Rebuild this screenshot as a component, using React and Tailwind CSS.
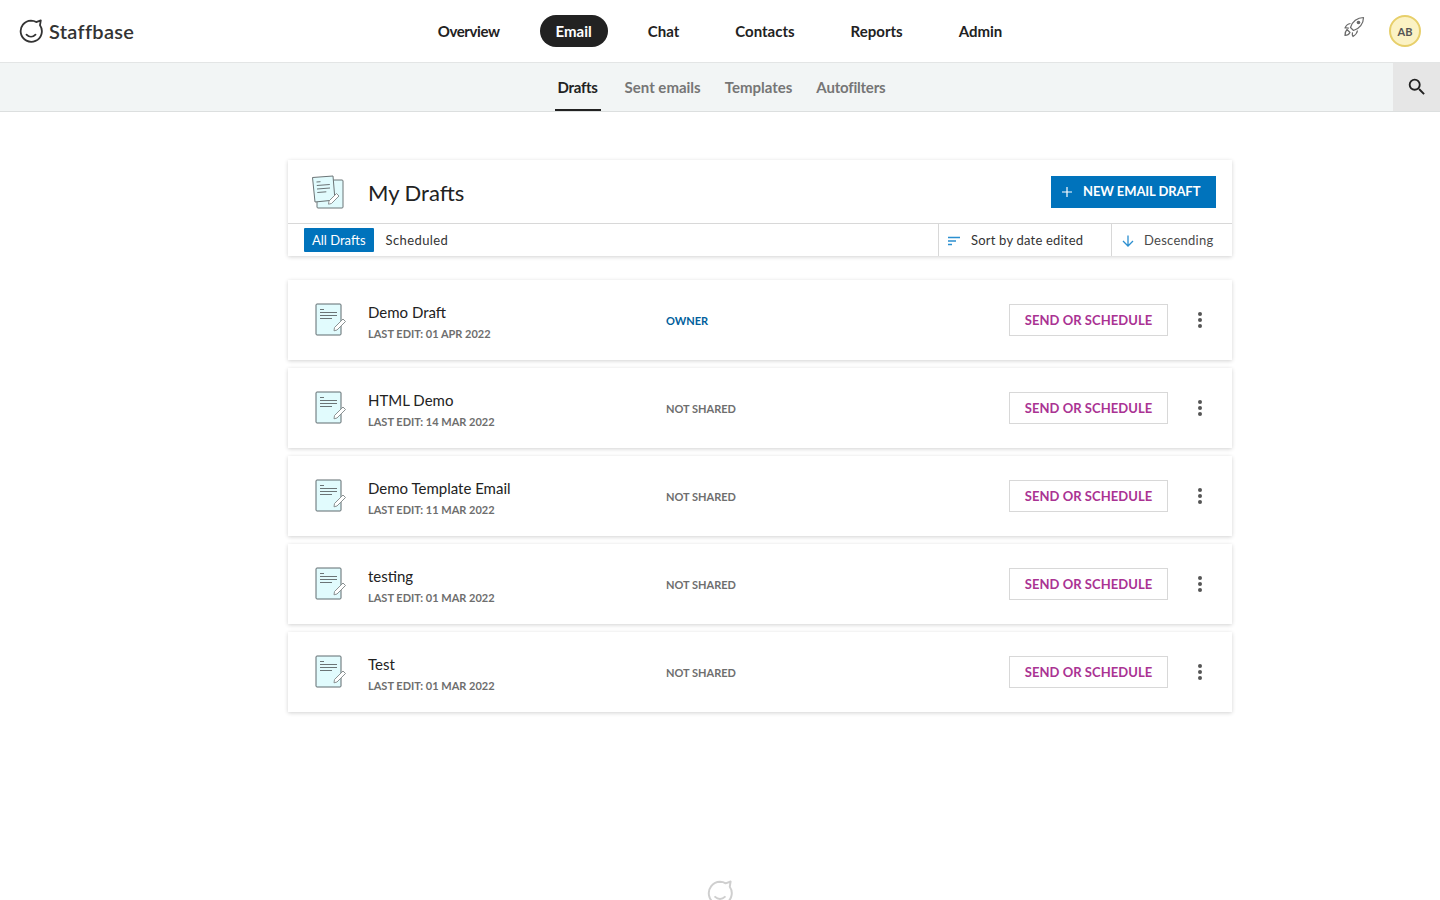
const drafts = [
  { name: 'Demo Draft', edited: '01 APR 2022', share: 'OWNER' },
  { name: 'HTML Demo', edited: '14 MAR 2022', share: 'NOT SHARED' },
  { name: 'Demo Template Email', edited: '11 MAR 2022', share: 'NOT SHARED' },
  { name: 'testing', edited: '01 MAR 2022', share: 'NOT SHARED' },
  { name: 'Test', edited: '01 MAR 2022', share: 'NOT SHARED' },
]

const mainNav = ['Overview', 'Email', 'Chat', 'Contacts', 'Reports', 'Admin']

function Logo({ className }) {
  return (
    <svg className={className} viewBox="0 0 24 24" fill="none" stroke="currentColor" strokeWidth="1.8" strokeLinecap="round" aria-hidden="true">
      <path d="M12 1.600c1.900 0 3.700.5 5.200 1.500L21.800 1.400 21 6.200a10.600 10.600 0 1 1-9-4.600z" strokeLinejoin="round" />
      <path d="M7.500 15.600c2.600 2.600 6.400 2.600 9 0" />
    </svg>
  )
}

function DocIcon() {
  return (
    <svg className="w-8 h-[34px]" viewBox="0 0 32 34" fill="none" aria-hidden="true">
      <rect x="1" y="1" width="25" height="31" rx="1" fill="#e1fbfd" stroke="#5f6b6e" strokeWidth="1" />
      <path d="M5 6.500h4M5 9.500h17M5 12.500h17M5 15.500h12" stroke="#6b7476" strokeWidth="1" />
      <path d="M19.500 24.500l8.500-8.500 2.500 2.500-8.500 8.500-3 .8z" fill="#fff" stroke="#8a9192" strokeWidth="1" strokeLinejoin="round" />
    </svg>
  )
}

function StackIcon() {
  return (
    <svg className="w-[34px] h-[34px]" viewBox="0 0 34 34" fill="none" aria-hidden="true">
      <rect x="6" y="5" width="26" height="28" rx="1" fill="#e1fbfd" stroke="#6b7476" strokeWidth="1" />
      <path d="M1.500 2.500L22 1l2 24-20 2z" fill="#e1fbfd" stroke="#6b7476" strokeWidth="1" strokeLinejoin="round" />
      <path d="M5.500 7l4-.3M5.800 10.500l13-1M6 14l13-1M6.300 17.500l9-.7" stroke="#6b7476" strokeWidth="1" />
      <path d="M18 26l7.500-7.500 2.500 2.500-7.500 7.500-3 .7z" fill="#fff" stroke="#8a9192" strokeWidth="1" strokeLinejoin="round" />
    </svg>
  )
}

function Rocket() {
  return (
    <svg className="w-[22px] h-[22px] mb-[8px] text-[#6a6a6a]" viewBox="0 0 22 22" fill="none" stroke="currentColor" strokeWidth="1.200" strokeLinejoin="round" aria-hidden="true">
      <path d="M20.500 1.500C14.500 1.500 9 5.500 7.500 11.500l3 3C16.500 13 20.500 7.500 20.500 1.500z" />
      <circle cx="15.500" cy="6.500" r="1.800" fill="currentColor" stroke="none" />
      <path d="M7.500 7.500C4.500 8 3 9.500 2 12c1.500-.3 3-.2 4 .3" />
      <path d="M4 13.500C2.500 15 2 17 2 19.500c2.500 0 4-1 5-3z" />
      <path d="M14.500 14.500c-.5 3-2 4.500-4.500 6-.7-1.300-.9-2.800-.5-4.200" />
    </svg>
  )
}

function DraftRow({ draft }) {
  const owner = draft.share === 'OWNER'
  return (
    <div className="flex items-center h-20 bg-white shadow-[0_1px_4px_rgba(0,0,0,0.18)]">
      <div className="flex items-center w-[378px] pl-[27px]">
        <DocIcon />
        <div className="ml-[21px] pt-[4px]">
          <div className="text-[15px] leading-5 text-[#222]">{draft.name}</div>
          <div className="mt-[4px] text-[11px] leading-4 font-bold text-[#6e6e6e]">LAST EDIT: {draft.edited}</div>
        </div>
      </div>
      <div className={`pt-[2px] text-[11px] font-bold ${owner ? 'text-[#00609c]' : 'text-[#6e6e6e]'}`}>{draft.share}</div>
      <div className="ml-auto flex items-center pr-[16px]">
        <button className="w-[159px] h-8 pt-[2px] border border-[#d8d8d8] text-[13px] font-bold tracking-[0.05px] text-[#aa3393]">SEND OR SCHEDULE</button>
        <div className="w-8 ml-4 flex flex-col items-center gap-[2px]">
          <span className="w-1 h-1 rounded-full bg-[#555]" />
          <span className="w-1 h-1 rounded-full bg-[#555]" />
          <span className="w-1 h-1 rounded-full bg-[#555]" />
        </div>
      </div>
    </div>
  )
}

export default function App() {
  return (
    <div className="h-[900px] overflow-hidden bg-white font-['Lato',sans-serif] text-[#222]">
      <header className="grid grid-cols-[1fr_auto_1fr] items-center h-[63px] border-b border-[#e3e5e5]">
        <div className="flex items-center pl-[19px] gap-[6px] text-[#333]">
          <Logo className="w-6 h-6" />
          <span className="text-[20px] font-semibold tracking-[0.3px]">Staffbase</span>
        </div>
        <nav className="flex items-center gap-6">
          {mainNav.map((item) => (
            <a
              key={item}
              className={`h-8 px-4 pt-px flex items-center rounded-full text-[15px] font-bold ${item === 'Email' ? 'bg-[#222] text-white' : 'text-[#222]'} ${item === 'Overview' ? 'tracking-[-0.4px]' : ''}`}
            >
              {item}
            </a>
          ))}
        </nav>
        <div className="flex items-center justify-end pr-[19px] gap-[24px]">
          <Rocket />
          <div className="w-8 h-8 pt-[2px] rounded-full border-2 border-[#e7cf6a] bg-[#fbf2c4] flex items-center justify-center text-[11px] font-bold text-[#555]">AB</div>
        </div>
      </header>

      <div className="grid grid-cols-[1fr_auto_1fr] h-[49px] bg-[#f2f5f5] border-b border-[#dcdfdf]">
        <div />
        <nav className="flex gap-4 ml-[4px] text-[15px] font-bold text-[#767676]">
          <a className="px-[3px] mr-1 pt-[2px] flex items-center h-[48px] tracking-[-0.3px] text-[#222] border-b-2 border-[#222]">Drafts</a>
          <a className="px-1 flex items-center h-[48px]">Sent emails</a>
          <a className="px-1 flex items-center h-[48px]">Templates</a>
          <a className="px-1 flex items-center h-[48px] tracking-[-0.2px]">Autofilters</a>
        </nav>
        <div className="flex justify-end">
          <div className="w-[47px] h-[48px] bg-[#e6e6e6] flex items-center justify-center">
            <svg className="w-[22px] h-[22px] text-[#222]" viewBox="0 0 24 24" fill="currentColor" aria-hidden="true">
              <path d="M15.500 14h-.79l-.28-.27A6.470 6.470 0 0 0 16 9.500 6.500 6.500 0 1 0 9.500 16c1.610 0 3.090-.59 4.230-1.570l.27.28v.79l5 4.990L20.490 19l-4.990-5zm-6 0C7.010 14 5 11.990 5 9.500S7.010 5 9.500 5 14 7.010 14 9.500 11.990 14 9.500 14z" />
            </svg>
          </div>
        </div>
      </div>

      <main className="w-[944px] ml-[288px] pt-12">
        <section className="bg-white shadow-[0_1px_4px_rgba(0,0,0,0.18)]">
          <div className="flex items-center h-[64px] pl-[23px] pr-4 border-b border-[#d8d8d8]">
            <StackIcon />
            <h1 className="ml-[23px] pt-[2px] text-[22px] font-normal text-[#222]">My Drafts</h1>
            <button className="ml-auto w-[165px] h-8 bg-[#0073bc] text-white text-[13px] font-bold tracking-[-0.1px] flex items-center pl-[11px] gap-[11px]">
              <svg className="w-[10px] h-[10px]" viewBox="0 0 10 10" stroke="currentColor" strokeWidth="1.200" aria-hidden="true">
                <path d="M5 0v10M0 5h10" />
              </svg>
              NEW EMAIL DRAFT
            </button>
          </div>
          <div className="flex items-center h-[32px] text-[13px] text-[#333]">
            <div className="flex-1 flex items-center pl-4">
              <span className="h-6 px-2 pt-px flex items-center bg-[#0073bc] text-white rounded-[1px]">All Drafts</span>
              <span className="ml-3 pt-px tracking-[0.4px]">Scheduled</span>
            </div>
            <div className="w-[173px] h-full pt-px border-l border-[#d8d8d8] flex items-center pl-[9px] gap-[11px] tracking-[0.2px]">
              <svg className="w-3 h-[10px] text-[#2b8fd0]" viewBox="0 0 12 10" stroke="currentColor" strokeWidth="1.300" aria-hidden="true">
                <path d="M0 1.500h12M0 5h8M0 8.500h4" />
              </svg>
              Sort by date edited
            </div>
            <div className="w-[121px] h-full pt-px border-l border-[#d8d8d8] flex items-center pl-[10px] gap-[10px] tracking-[0.25px] text-[#4a4a4a]">
              <svg className="w-3 h-3 text-[#2b8fd0]" viewBox="0 0 12 12" fill="none" stroke="currentColor" strokeWidth="1.300" aria-hidden="true">
                <path d="M6 0.500v10.500M1 6l5 5 5-5" />
              </svg>
              Descending
            </div>
          </div>
        </section>

        <div className="mt-6 flex flex-col gap-2">
          {drafts.map((d) => (
            <DraftRow key={d.name} draft={d} />
          ))}
        </div>
      </main>

      <div className="flex justify-center mt-[168px]">
        <Logo className="w-[26px] h-[26px] text-[#cfcfcf]" />
      </div>
    </div>
  )
}
